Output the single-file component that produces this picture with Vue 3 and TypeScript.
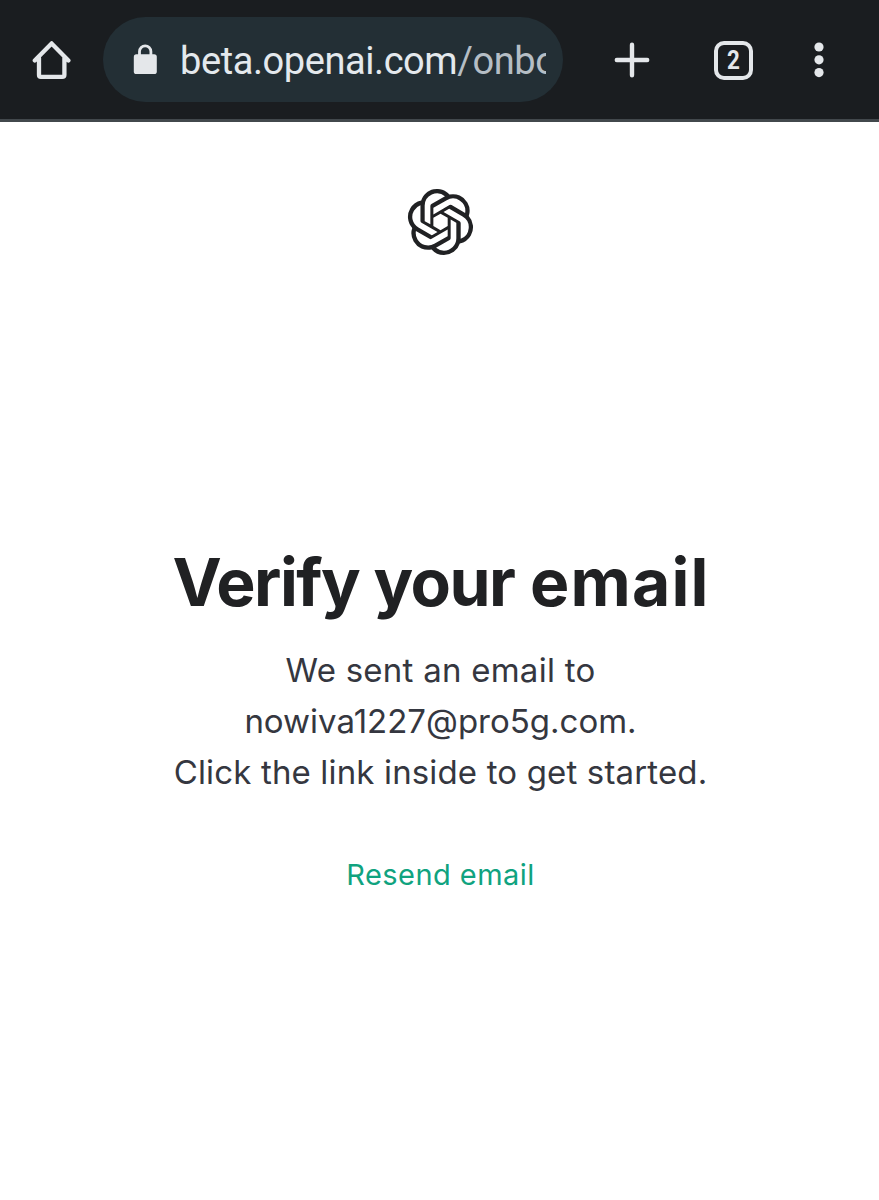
<script setup lang="ts">
const tabCount: number = 2
const host: string = 'beta.openai.com'
const path: string = '/onbo'
</script>

<template>
  <div class="screen">
    <header class="toolbar">
      <svg class="home" viewBox="0 0 40 42" width="40" height="42">
        <path d="M2.8 21.4 19.6 4.4l16.8 17M7 19v17q0 1.8 1.8 1.8h21.4q2.2 0 2.2-1.8V19" fill="none" stroke="#e4e7ea" stroke-width="4.3" stroke-linejoin="round" stroke-linecap="round" />
      </svg>
      <div class="address">
        <svg class="lock" viewBox="0 0 24 31" width="24" height="31">
          <path d="M6.5 12V7.6a5.7 5.7 0 0 1 11.4 0V12" fill="none" stroke="#e4e7ea" stroke-width="2.8" />
          <rect x="0.8" y="10.3" width="23" height="19.8" rx="2.6" fill="#e4e7ea" />
        </svg>
        <div class="url">{{ host }}<span class="path">{{ path }}</span></div>
      </div>
      <svg class="plus" viewBox="0 0 36 36" width="36" height="36">
        <path d="M18 2.8v30.4M2.8 18h30.4" stroke="#e4e7ea" stroke-width="4.4" stroke-linecap="round" />
      </svg>
      <div class="tabs"><span>{{ tabCount }}</span></div>
      <svg class="more" viewBox="0 0 10 36" width="10" height="36">
        <g fill="#e4e7ea"><circle cx="5" cy="5" r="4.6" /><circle cx="5" cy="17.8" r="4.6" /><circle cx="5" cy="30.6" r="4.6" /></g>
      </svg>
    </header>
    <main class="page">
      <svg class="logo" viewBox="0 0 24 24" width="67" height="66">
        <path fill="#202123" d="M22.2819 9.8211a5.9847 5.9847 0 0 0-.5157-4.9108 6.0462 6.0462 0 0 0-6.5098-2.9A6.0651 6.0651 0 0 0 4.9807 4.1818a5.9847 5.9847 0 0 0-3.9977 2.9 6.0462 6.0462 0 0 0 .7427 7.0966 5.98 5.98 0 0 0 .511 4.9107 6.051 6.051 0 0 0 6.5146 2.9001A5.9847 5.9847 0 0 0 13.2599 24a6.0557 6.0557 0 0 0 5.7718-4.2058 5.9894 5.9894 0 0 0 3.9977-2.9001 6.0557 6.0557 0 0 0-.7475-7.0729zm-9.022 12.6081a4.4755 4.4755 0 0 1-2.8764-1.0408l.1419-.0804 4.7783-2.7582a.7948.7948 0 0 0 .3927-.6813v-6.7369l2.02 1.1686a.071.071 0 0 1 .038.052v5.5826a4.504 4.504 0 0 1-4.4945 4.4944zm-9.6607-4.1254a4.4708 4.4708 0 0 1-.5346-3.0137l.142.0852 4.783 2.7582a.7712.7712 0 0 0 .7806 0l5.8428-3.3685v2.3324a.0804.0804 0 0 1-.0332.0615L9.74 19.9502a4.4992 4.4992 0 0 1-6.1408-1.6464zM2.3408 7.8956a4.485 4.485 0 0 1 2.3655-1.9728V11.6a.7664.7664 0 0 0 .3879.6765l5.8144 3.3543-2.0201 1.1685a.0757.0757 0 0 1-.071 0l-4.8303-2.7865A4.504 4.504 0 0 1 2.3408 7.872zm16.5963 3.8558L13.1038 8.364 15.1192 7.2a.0757.0757 0 0 1 .071 0l4.8303 2.7913a4.4944 4.4944 0 0 1-.6765 8.1042v-5.6772a.79.79 0 0 0-.407-.667zm2.0107-3.0231l-.142-.0852-4.7735-2.7818a.7759.7759 0 0 0-.7854 0L9.409 9.2297V6.8974a.0662.0662 0 0 1 .0284-.0615l4.8303-2.7866a4.4992 4.4992 0 0 1 6.6802 4.66zM8.3065 12.863l-2.02-1.1638a.0804.0804 0 0 1-.038-.0567V6.0742a4.4992 4.4992 0 0 1 7.3757-3.4537l-.142.0805L8.704 5.459a.7948.7948 0 0 0-.3927.6813zm1.0976-2.3654l2.602-1.4998 2.6069 1.4998v2.9994l-2.5974 1.4997-2.6067-1.4997Z" />
      </svg>
      <h1><span class="tight">Verify your</span> <span class="wide">email</span></h1>
      <p class="line sent">We sent an email to</p>
      <p class="line mail">nowiva1227@pro5g.com.</p>
      <p class="line click">Click the link inside to get started.</p>
      <a class="resend">Resend email</a>
    </main>
  </div>
</template>

<style>
body { background: #fff; }
</style>

<style scoped>
.screen { width: 879px; height: 1200px; overflow: hidden; background: #fff; }
.toolbar { box-sizing: border-box; height: 122px; padding: 17px 0 0 32px; display: flex; align-items: flex-start; background: #1a1d20; border-bottom: 3px solid #42484c; }
.home { margin-top: 22px; flex: none; }
.address { box-sizing: border-box; margin-left: 31px; width: 460px; height: 85px; border-radius: 43px; padding-left: 30px; background: #232f35; display: flex; flex: none; }
.lock { margin-top: 27px; flex: none; }
.url { margin-left: 23px; width: 366px; overflow: hidden; white-space: nowrap; font: 400 38px/89px Roboto, sans-serif; letter-spacing: -0.42px; color: #e4e9ed; }
.path { color: #b5bec5; }
.plus { margin: 25px 0 0 51px; flex: none; }
.tabs { box-sizing: border-box; margin: 23.5px 0 0 64px; width: 39px; height: 39px; border: 4px solid #e4e7ea; border-radius: 10px; display: flex; align-items: center; justify-content: center; color: #e4e7ea; font: 700 26px/30px Roboto, sans-serif; flex: none; }
.tabs span { transform: scaleX(0.86); }
.more { margin: 25px 0 0 61px; flex: none; }
.page { display: flex; flex-direction: column; align-items: center; padding-top: 67px; color: #353740; font-family: Inter, sans-serif; white-space: nowrap; }
.logo { margin-left: 1px; }
h1 { margin: 287px 0 0 2px; height: 80px; font-size: 66px; line-height: 80px; font-weight: 650; color: #202123; }
.tight { letter-spacing: -1.5px; }
.wide { letter-spacing: 1.2px; margin-right: -1.2px; }
.line { margin: 0 0 0 2px; font-size: 33px; line-height: 51px; }
.sent { margin-top: 23px; letter-spacing: 0.25px; }
.click { letter-spacing: 0.15px; }
.resend { margin: 52px 0 0 2px; font-size: 29px; line-height: 50px; letter-spacing: 0.45px; color: #10a37f; }
</style>
